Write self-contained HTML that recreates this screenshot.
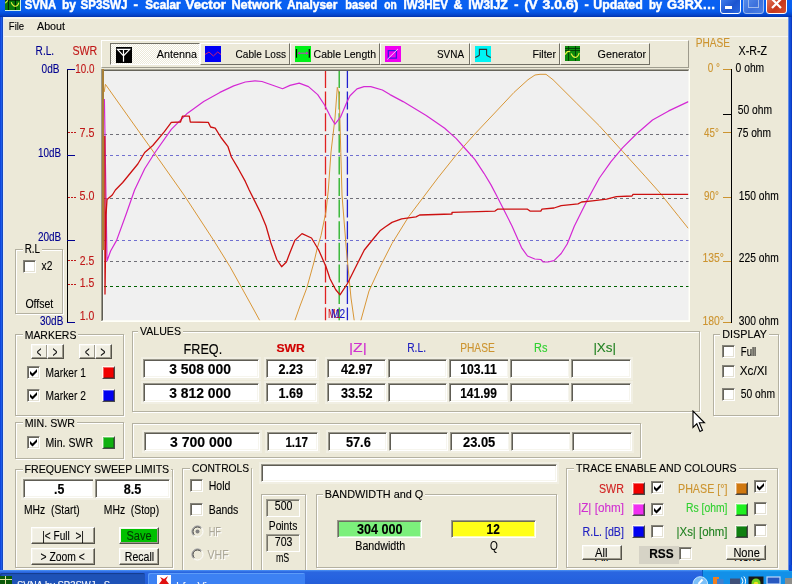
<!DOCTYPE html>
<html>
<head>
<meta charset="utf-8">
<title>SVNA by SP3SWJ</title>
<style>
html,body{margin:0;padding:0;}
body{width:792px;height:584px;overflow:hidden;background:#ECE9D8;position:relative;font-family:"Liberation Sans",sans-serif;font-size:12px;color:#000;}
.a{position:absolute;white-space:nowrap;}
#txt{pointer-events:none;will-change:transform;}
#title{left:0;top:0;width:792px;height:17px;background:linear-gradient(#0A60F2 0,#0860F0 45%,#0657E6 70%,#0445CC 88%,#0232AA 100%);}
#lb{left:0;top:17px;width:4px;height:556px;background:linear-gradient(90deg,#0A3CD8 0,#1C5CE8 1.5px,#1444B8 2.7px,#D8E4FF 3.1px,#F0F0EA 4px);}
#rb{left:788px;top:17px;width:4px;height:556px;background:linear-gradient(90deg,#B8C8EC 0,#1450DC 1px,#1255E0 2.2px,#0A30B8 4px);}
.gb{position:absolute;border:1px solid #B4B1A1;box-shadow:inset 1px 1px 0 #fff,1px 1px 0 #fff;box-sizing:border-box;}
.in{position:absolute;box-sizing:border-box;background:#fff;border:1px solid;border-color:#9A988C #fff #fff #9A988C;box-shadow:inset 1px 1px 0 #5E5C54,inset -1px -1px 0 #F6F5EE,0 0 0 2px #F1EFE3;}
.bt{position:absolute;box-sizing:border-box;background:#F0EEE2;border:1px solid;border-color:#fff #55534A #55534A #fff;box-shadow:inset -1px -1px 0 #9D9A8C,inset 1px 1px 0 #F6F4EA;}
.cb{position:absolute;box-sizing:border-box;width:13px;height:13px;background:#fff;border:1px solid;border-color:#85837A #fff #fff #85837A;box-shadow:inset 1px 1px 0 #66645A,inset -1px -1px 0 #E4E1D4;}
.cb svg{position:absolute;left:2px;top:2px;overflow:visible;}
.sq{position:absolute;box-sizing:border-box;width:12px;height:12px;border:1px solid;border-color:#FFF8F0 #4A4A4A #4A4A4A #FFF8F0;box-shadow:inset 1px 1px 0 rgba(255,255,255,.4),inset -1px -1px 0 rgba(40,40,40,.45);}
.tb{top:43px;width:90px;height:22px;box-sizing:border-box;border:1px solid;border-color:#fff #716F64 #716F64 #fff;}
.tb.on{border-color:#716F64 #fff #fff #716F64;background:#F6F5EF repeating-conic-gradient(#fff 0 25%,#ECE9D8 0 50%) 0 0/2px 2px;}
.tb .ic{position:absolute;left:4px;top:2px;width:16px;height:16px;}
.tb.on .ic{left:5px;top:3px;}

</style>
</head>
<body>
<div class="a" id="title"></div>
<div class="a" id="lb"></div><div class="a" id="rb"></div>
<svg class="a" style="left:5px;top:0" width="16" height="11" viewBox="0 0 16 11"><rect x="0" y="0" width="16" height="11" fill="#0A7A0A"/><rect x="0" y="0" width="15" height="0.6" fill="#021802"/><path d="M3.4 0V10M10.4 0V10" stroke="#032003" stroke-width="1.1" fill="none"/><path d="M0 10.5H16M15.5 0V11" stroke="#D0F0E0" stroke-width="1" fill="none"/><path d="M0.3 3.2L2.8 0.4M6.2 2.2Q8 6.5 10.5 6.3T13.8 2.6" stroke="#E8F040" stroke-width="1.1" fill="none"/></svg>
<div class="a" style="left:720px;top:-7px;width:21px;height:21px;border-radius:3px;border:1px solid #fff;box-sizing:border-box;background:linear-gradient(135deg,#4C8CF4,#1C54D0 60%,#2A68E0)"><div class="a" style="left:4px;top:12px;width:7px;height:3px;background:#fff"></div></div>
<div class="a" style="left:743px;top:-7px;width:21px;height:21px;border-radius:3px;border:1px solid #9DB9EC;box-sizing:border-box;background:linear-gradient(135deg,#5C94F0,#3C70DC 60%,#4A80E6)"><div class="a" style="left:4px;top:4px;width:9px;height:7px;border:1px solid #9DB9EC;border-top-width:2px"></div></div>
<div class="a" style="left:766px;top:-7px;width:21px;height:21px;border-radius:3px;border:1px solid #fff;box-sizing:border-box;background:linear-gradient(135deg,#E8856A,#C8381C 60%,#D85030)"><svg class="a" style="left:3px;top:3px" width="13" height="13" viewBox="0 0 13 13"><path d="M2 2L11 11M11 2L2 11" stroke="#fff" stroke-width="2.2"/></svg></div>
<div class="a" style="left:4px;top:17px;width:784px;height:2px;background:#F6F5EE"></div>
<div class="a" style="left:4px;top:36px;width:784px;height:1px;background:#F8F7F1"></div>
<div class="a" style="left:101px;top:40px;width:588px;height:28px;box-sizing:border-box;border:1px solid;border-color:#fff #9D9A8C #A09E90 #fff"></div>
<div class="a tb on" style="left:110px;width:90px"><svg class="ic" viewBox="0 0 16 16"><rect width="16" height="16" fill="#000"/><path d="M1.5 2.4H13.7L7.5 8.8ZM7.5 2.4V14.7" stroke="#fff" stroke-width="1.2" fill="none"/></svg></div>
<div class="a tb" style="left:200px;width:90px"><svg class="ic" viewBox="0 0 16 16"><rect width="16" height="16" fill="#0000F4"/><path d="M0 8.5L4 6L8.4 10L12.7 6L16 8.5" stroke="#D02070" stroke-width="1" fill="none"/></svg></div>
<div class="a tb" style="left:290px;width:90px"><svg class="ic" viewBox="0 0 16 16"><rect width="16" height="16" fill="#00F018"/><path d="M1.5 3V11.8M14.3 3V11.8" stroke="#000" stroke-width="1.2" fill="none"/><path d="M3 7.2H13" stroke="#C040C0" stroke-width="1"/><path d="M2.3 7.2L5 5.6V8.8ZM13.6 7.2L11 5.6V8.8Z" fill="#C030C0"/></svg></div>
<div class="a tb" style="left:380px;width:90px"><svg class="ic" viewBox="0 0 16 16"><rect width="16" height="16" fill="#F000F0"/><path d="M3.3 4.6H11.4V12.2H3.3Z" stroke="#3818E0" stroke-width="1.3" fill="none"/><path d="M2.3 13.4L12.9 3" stroke="#F8D0F8" stroke-width="1"/></svg></div>
<div class="a tb" style="left:470px;width:90px"><svg class="ic" viewBox="0 0 16 16"><rect width="16" height="16" fill="#00F4F4"/><path d="M0.3 11.4L3.6 9.8L4.4 9V3.4H11.6V9L12.4 9.8L15.7 11.4" stroke="#303030" stroke-width="1.1" fill="none"/></svg></div>
<div class="a tb" style="left:560px;width:90px"><svg class="ic" viewBox="0 0 16 16"><rect width="15" height="15" fill="#0E8C0E"/><path d="M0 2.5H15M0 4.5H15M3.5 0V15M10.5 0V15" stroke="#023402" stroke-width="1" fill="none" opacity=".8"/><path d="M0 8.5L2.4 5.6L5.2 5.4M6 7.4Q8 11.5 10.5 11.3T14.2 6.8" stroke="#E8F040" stroke-width="1.2" fill="none"/></svg></div>
<svg class="a" style="left:60px;top:60px" width="20" height="270" viewBox="60 60 20 270" shape-rendering="crispEdges"><path d="M67.5 69V323" stroke="#000" stroke-width="1" fill="none"/><path d="M67 69.5H75" stroke="#000090" stroke-width="1"/><path d="M67 155.5H75" stroke="#000090" stroke-width="1"/><path d="M67 240.5H75" stroke="#000090" stroke-width="1"/><path d="M67 322.5H75" stroke="#000090" stroke-width="1"/><path d="M68 132.5H76" stroke="#C01818" stroke-width="1" stroke-dasharray="2 1"/><path d="M68 197.5H76" stroke="#C01818" stroke-width="1" stroke-dasharray="2 1"/><path d="M68 260.5H76" stroke="#C01818" stroke-width="1" stroke-dasharray="2 1"/><path d="M68 284.5H76" stroke="#C01818" stroke-width="1" stroke-dasharray="2 1"/></svg>
<div class="gb" style="left:15px;top:249px;width:48px;height:65px;"></div>
<div class="a" style="left:22.7px;top:248px;width:19.4px;height:4px;background:#ECE9D8"></div>
<div class="cb" style="left:23px;top:259.5px;background:#fff"></div>
<svg class="a" style="left:720px;top:60px" width="20" height="270" viewBox="720 60 20 270" shape-rendering="crispEdges"><path d="M731.5 69V323" stroke="#000" stroke-width="1" fill="none"/><path d="M723 69.5H731" stroke="#CC9430" stroke-width="1"/><path d="M723 132.5H731" stroke="#CC9430" stroke-width="1"/><path d="M723 197.5H731" stroke="#CC9430" stroke-width="1"/><path d="M723 261.5H731" stroke="#CC9430" stroke-width="1"/><path d="M723 322.5H731" stroke="#CC9430" stroke-width="1"/><path d="M723 114.5H731" stroke="#000" stroke-width="1"/></svg>
<svg class="a" style="left:101px;top:69px" width="589" height="253" viewBox="101 69 589 253"><rect x="101" y="69" width="589" height="253" fill="#FFFFF8"/><rect x="101" y="69" width="588" height="1" fill="#A8A698"/><rect x="101" y="69" width="1" height="252" fill="#9A988A"/><rect x="102" y="70" width="586.5" height="1" fill="#66645A"/><rect x="102" y="70" width="1" height="250.5" fill="#5E5C54"/><rect x="103.4" y="71" width="585.1" height="249.3" fill="#F0F0F0"/><clipPath id="gc"><rect x="103" y="71" width="585.5" height="249.3"/></clipPath><g clip-path="url(#gc)"><path d="M103.5 134.5H689" stroke="#707078" stroke-width="1" stroke-dasharray="3 3" shape-rendering="crispEdges"/><path d="M103.5 155.5H689" stroke="#7070D0" stroke-width="1" stroke-dasharray="3 3" shape-rendering="crispEdges"/><path d="M103.5 198.5H689" stroke="#707078" stroke-width="1" stroke-dasharray="3 3" shape-rendering="crispEdges"/><path d="M103.5 240.5H689" stroke="#7070D0" stroke-width="1" stroke-dasharray="3 3" shape-rendering="crispEdges"/><path d="M103.5 261.5H689" stroke="#707078" stroke-width="1" stroke-dasharray="3 3" shape-rendering="crispEdges"/><path d="M103.5 286.5H689" stroke="#006000" stroke-width="1" stroke-dasharray="3 3" shape-rendering="crispEdges"/><path d="M325.5 70V321" stroke="#E02020" stroke-width="1.3" stroke-dasharray="18 3.6"/><path d="M339.2 70V321" stroke="#20B020" stroke-width="1.3" stroke-dasharray="18 3.6"/><path d="M347.4 70V321" stroke="#2020D0" stroke-width="1.3" stroke-dasharray="18 3.6"/><polyline points="104.2,92.0 105.4,84.3 130.0,119.0 160.0,161.0 184.0,195.0 213.7,240.4 230.0,266.7 242.0,288.3 254.0,310.0 260.0,321.0" fill="none" stroke="#D89636" stroke-width="1.0" stroke-linejoin="round"/><polyline points="294.7,321.0 300.0,306.0 306.7,288.3 314.0,262.0 317.3,248.0 321.0,235.6 326.0,211.6 328.3,190.0 331.0,152.0 335.0,118.0 337.3,87.3 339.2,94.6 340.8,152.4 342.0,195.0 346.4,250.0 351.0,298.0 354.3,321.0" fill="none" stroke="#D89636" stroke-width="1.0" stroke-linejoin="round"/><polyline points="360.7,321.0 369.0,291.0 380.0,267.0 392.0,243.5 408.8,216.4 425.0,195.0 437.8,178.0 456.3,154.8 474.8,134.0 495.6,112.0 514.0,92.4 528.0,79.7 535.0,75.0 540.0,74.3 546.0,74.3 553.0,79.7 576.2,102.8 599.4,125.9 622.5,151.3 645.6,176.8 661.8,195.0 664.3,198.4 678.7,216.4 688.3,228.4" fill="none" stroke="#D89636" stroke-width="1.0" stroke-linejoin="round"/><polyline points="104.4,99.0 107.0,261.0 110.6,251.0 116.6,240.4 126.2,214.0 134.6,190.0 144.7,168.7 155.0,152.5 171.3,129.4 187.5,113.2 203.7,101.6 219.9,92.4 233.7,85.9 245.3,82.0 255.0,80.8 262.0,81.5 272.0,85.0 282.6,88.7 290.0,85.4 299.2,83.1 308.5,86.6 317.7,94.6 324.6,105.0 330.4,116.6 335.0,124.2 340.8,116.6 346.6,102.7 350.0,95.8 357.0,88.9 364.0,86.6 370.8,86.6 382.4,90.0 390.0,94.6 403.1,101.6 426.2,115.5 444.7,128.2 456.3,138.6 465.5,149.0 474.8,159.4 484.0,173.3 491.0,184.9 496.3,195.0 502.3,206.8 512.0,226.0 521.5,247.6 527.5,256.0 534.8,259.0 540.8,259.5 543.2,262.0 548.0,262.0 554.0,260.7 561.2,253.5 567.2,244.0 574.4,226.0 581.6,211.6 587.6,199.6 592.8,190.0 599.4,178.0 611.0,161.7 622.5,147.9 636.4,134.0 652.5,120.0 668.7,110.9 688.4,101.6" fill="none" stroke="#D428D4" stroke-width="1.2" stroke-linejoin="round"/><polyline points="104.8,136.0 105.0,294.0 106.0,215.0 107.0,199.6 112.3,195.0 115.4,190.0 122.7,182.5 137.8,164.0 144.7,152.5 152.8,145.5 164.4,131.7 171.3,122.4 180.5,122.0 182.4,116.2 189.3,116.2 190.3,122.0 208.3,122.4 210.6,127.0 215.2,128.2 221.0,137.5 228.0,146.7 231.4,157.0 238.3,168.7 245.3,181.4 249.2,190.0 254.0,199.6 260.0,211.6 266.0,226.0 270.8,242.8 276.8,259.5 281.6,266.7 286.4,262.0 290.0,252.4 294.8,240.4 302.0,233.6 311.5,238.0 318.7,250.0 326.0,266.7 330.0,278.7 335.6,289.5 340.0,294.8 347.5,283.5 354.7,269.0 364.3,250.0 374.0,238.0 380.0,230.8 384.8,227.2 392.0,222.4 401.6,218.8 416.0,216.9 419.6,215.0 452.0,214.0 452.0,212.3 495.0,211.1 497.5,209.2 527.5,209.2 530.0,211.1 540.8,211.1 542.0,209.2 554.0,208.0 561.2,205.6 578.0,203.9 581.6,202.0 592.4,200.8 606.7,199.1 616.3,196.7 632.0,196.0 633.0,194.3 688.3,194.3" fill="none" stroke="#CC1010" stroke-width="1.3" stroke-linejoin="round"/></g></svg>
<div class="a" style="left:102px;top:69px;width:2px;height:181px;background:#A88038"></div>
<div class="gb" style="left:15px;top:334px;width:109px;height:82px;"></div>
<div class="a" style="left:22.7px;top:333px;width:55.7px;height:4px;background:#ECE9D8"></div>
<div class="bt" style="left:31px;top:344px;width:16.5px;height:14.5px;background:#F0EEE2"></div>
<div class="bt" style="left:47px;top:344px;width:16.5px;height:14.5px;background:#F0EEE2"></div>
<div class="bt" style="left:79px;top:344px;width:16.5px;height:14.5px;background:#F0EEE2"></div>
<div class="bt" style="left:95px;top:344px;width:16.5px;height:14.5px;background:#F0EEE2"></div>
<div class="cb" style="left:27px;top:366px;background:#fff"><svg width="7" height="7" viewBox="0 0 7 7"><path d="M0 2L2.5 4.5L7 0V3L2.5 7.5L0 5Z" fill="#000"/></svg></div>
<div class="sq" style="left:102px;top:366px;width:13px;height:13px;background:#F00000"></div>
<div class="cb" style="left:27px;top:389px;background:#fff"><svg width="7" height="7" viewBox="0 0 7 7"><path d="M0 2L2.5 4.5L7 0V3L2.5 7.5L0 5Z" fill="#000"/></svg></div>
<div class="sq" style="left:102px;top:389px;width:13px;height:13px;background:#0000F0"></div>
<div class="gb" style="left:15px;top:422px;width:109px;height:37px;"></div>
<div class="a" style="left:22.7px;top:421px;width:54.3px;height:4px;background:#ECE9D8"></div>
<div class="cb" style="left:27px;top:436px;background:#fff"><svg width="7" height="7" viewBox="0 0 7 7"><path d="M0 2L2.5 4.5L7 0V3L2.5 7.5L0 5Z" fill="#000"/></svg></div>
<div class="sq" style="left:102px;top:436px;width:13px;height:13px;background:#10B010"></div>
<div class="gb" style="left:132px;top:331px;width:568px;height:81px;"></div>
<div class="a" style="left:138px;top:330.5px;width:45px;height:4px;background:#ECE9D8"></div>
<div class="in" style="left:143px;top:359px;width:116px;height:19px;background:#fff"></div>
<div class="in" style="left:266px;top:359px;width:51px;height:19px;background:#fff"></div>
<div class="in" style="left:327px;top:359px;width:59px;height:19px;background:#fff"></div>
<div class="in" style="left:388px;top:359px;width:59px;height:19px;background:#fff"></div>
<div class="in" style="left:449px;top:359px;width:60px;height:19px;background:#fff"></div>
<div class="in" style="left:510px;top:359px;width:60px;height:19px;background:#fff"></div>
<div class="in" style="left:571px;top:359px;width:60px;height:19px;background:#fff"></div>
<div class="in" style="left:143px;top:383px;width:116px;height:19px;background:#fff"></div>
<div class="in" style="left:266px;top:383px;width:51px;height:19px;background:#fff"></div>
<div class="in" style="left:327px;top:383px;width:59px;height:19px;background:#fff"></div>
<div class="in" style="left:388px;top:383px;width:59px;height:19px;background:#fff"></div>
<div class="in" style="left:449px;top:383px;width:60px;height:19px;background:#fff"></div>
<div class="in" style="left:510px;top:383px;width:60px;height:19px;background:#fff"></div>
<div class="in" style="left:571px;top:383px;width:60px;height:19px;background:#fff"></div>
<div class="gb" style="left:132px;top:423px;width:509px;height:35px;"></div>
<div class="in" style="left:144px;top:432px;width:116px;height:19px;background:#fff"></div>
<div class="in" style="left:267px;top:432px;width:51px;height:19px;background:#fff"></div>
<div class="in" style="left:328px;top:432px;width:59px;height:19px;background:#fff"></div>
<div class="in" style="left:389px;top:432px;width:59px;height:19px;background:#fff"></div>
<div class="in" style="left:450px;top:432px;width:60px;height:19px;background:#fff"></div>
<div class="in" style="left:511px;top:432px;width:60px;height:19px;background:#fff"></div>
<div class="in" style="left:572px;top:432px;width:60px;height:19px;background:#fff"></div>
<div class="gb" style="left:713px;top:334px;width:66px;height:82px;"></div>
<div class="a" style="left:720.3px;top:333.5px;width:48.7px;height:4px;background:#ECE9D8"></div>
<div class="cb" style="left:722px;top:345px;background:#fff"></div>
<div class="cb" style="left:722px;top:365px;background:#fff"></div>
<div class="cb" style="left:722px;top:388px;background:#fff"></div>
<svg class="a" style="left:692px;top:410px" width="14" height="23" viewBox="0 0 14 23"><path d="M1 1V17.5L4.8 13.8L8 21.5L10.5 20.3L7.3 12.8H12.5Z" fill="#fff" stroke="#000" stroke-width="1.1"/></svg>
<div class="gb" style="left:15px;top:469px;width:158px;height:99px;"></div>
<div class="a" style="left:22.6px;top:468.5px;width:148.6px;height:4px;background:#ECE9D8"></div>
<div class="in" style="left:23px;top:479px;width:71px;height:19px;background:#fff"></div>
<div class="in" style="left:95px;top:479px;width:75px;height:19px;background:#fff"></div>
<div class="bt" style="left:31px;top:527px;width:64px;height:16.5px;background:#F0EEE2"></div>
<div class="bt" style="left:31px;top:548px;width:64px;height:16.5px;background:#F0EEE2"></div>
<div class="bt" style="left:119px;top:527px;width:40px;height:16.5px;background:#00C000"></div>
<div class="bt" style="left:119px;top:548px;width:40px;height:16.5px;background:#F0EEE2"></div>
<div class="gb" style="left:182px;top:468px;width:70px;height:108px;"></div>
<div class="a" style="left:190px;top:467px;width:61.2px;height:4px;background:#ECE9D8"></div>
<div class="cb" style="left:190px;top:479px;background:#fff"></div>
<div class="cb" style="left:190px;top:503px;background:#fff"></div>
<svg class="a" style="left:190.5px;top:524.5px" width="13" height="13" viewBox="0 0 13 13"><circle cx="6.5" cy="6.5" r="5.5" fill="#ECE9D8" stroke="#fff" stroke-width="1"/><path d="M2.6 10.4A5.5 5.5 0 0 1 10.4 2.6" fill="none" stroke="#808080" stroke-width="1"/><path d="M3.3 9.7A4.5 4.5 0 0 1 9.7 3.3" fill="none" stroke="#404040" stroke-width="1"/><circle cx="6.5" cy="6.5" r="2" fill="#808080"/></svg>
<svg class="a" style="left:190.5px;top:548.3px" width="13" height="13" viewBox="0 0 13 13"><circle cx="6.5" cy="6.5" r="5.5" fill="#ECE9D8" stroke="#fff" stroke-width="1"/><path d="M2.6 10.4A5.5 5.5 0 0 1 10.4 2.6" fill="none" stroke="#808080" stroke-width="1"/><path d="M3.3 9.7A4.5 4.5 0 0 1 9.7 3.3" fill="none" stroke="#404040" stroke-width="1"/></svg>
<div class="in" style="left:261px;top:464px;width:296px;height:18px;background:#fff"></div>
<div class="gb" style="left:261px;top:494px;width:45px;height:82px;"></div>
<div class="in" style="left:266px;top:499px;width:34px;height:18px;background:#ECE9D8;border-color:#A09E92 #fff #fff #A09E92;box-shadow:inset 1px 1px 0 #77756A"></div>
<div class="in" style="left:266px;top:534px;width:34px;height:18px;background:#ECE9D8;border-color:#A09E92 #fff #fff #A09E92;box-shadow:inset 1px 1px 0 #77756A"></div>
<div class="gb" style="left:316px;top:494px;width:241px;height:74px;"></div>
<div class="a" style="left:322.8px;top:493.5px;width:102.5px;height:4px;background:#ECE9D8"></div>
<div class="in" style="left:337px;top:520px;width:85px;height:18px;background:#7CF07C;box-shadow:inset 1px 1px 0 #6A7060,inset -1px -1px 0 #C8F8C8"></div>
<div class="in" style="left:451px;top:520px;width:85px;height:18px;background:#FFFF18;box-shadow:inset 1px 1px 0 #707050,inset -1px -1px 0 #FFFFB0"></div>
<div class="gb" style="left:566px;top:468px;width:212px;height:100px;"></div>
<div class="a" style="left:574.1px;top:467px;width:164.5px;height:4px;background:#ECE9D8"></div>
<div class="sq" style="left:632px;top:482px;width:13px;height:13px;background:#F00000"></div>
<div class="cb" style="left:651px;top:481px;background:#fff"><svg width="7" height="7" viewBox="0 0 7 7"><path d="M0 2L2.5 4.5L7 0V3L2.5 7.5L0 5Z" fill="#000"/></svg></div>
<div class="sq" style="left:735px;top:482px;width:13px;height:13px;background:#D07810"></div>
<div class="cb" style="left:754px;top:480px;background:#fff"><svg width="7" height="7" viewBox="0 0 7 7"><path d="M0 2L2.5 4.5L7 0V3L2.5 7.5L0 5Z" fill="#000"/></svg></div>
<div class="sq" style="left:632px;top:503px;width:13px;height:13px;background:#F030F0"></div>
<div class="cb" style="left:651px;top:503px;background:#fff"><svg width="7" height="7" viewBox="0 0 7 7"><path d="M0 2L2.5 4.5L7 0V3L2.5 7.5L0 5Z" fill="#000"/></svg></div>
<div class="sq" style="left:735px;top:503px;width:13px;height:13px;background:#20F020"></div>
<div class="cb" style="left:754px;top:502px;background:#fff"></div>
<div class="sq" style="left:632px;top:525px;width:13px;height:13px;background:#0000F0"></div>
<div class="cb" style="left:651px;top:525px;background:#fff"></div>
<div class="sq" style="left:735px;top:525px;width:13px;height:13px;background:#108010"></div>
<div class="cb" style="left:754px;top:524px;background:#fff"></div>
<div class="a" style="left:595px;top:550px;font-size:12px;line-height:14px">All</div>
<div class="bt" style="left:582px;top:544.5px;width:39.5px;height:15.5px;background:#F0EEE2"></div>
<div class="a" style="left:638.5px;top:546px;width:40px;height:17.5px;background:#D6D3C6"></div>
<div class="cb" style="left:678.5px;top:547px;background:#fff"></div>
<div class="a" style="left:734px;top:550px;font-size:12px;line-height:14px;letter-spacing:-.4px">None</div>
<div class="bt" style="left:726px;top:544.5px;width:40px;height:15.5px;background:#F0EEE2"></div>
<div class="a" style="left:0px;top:569.5px;width:792px;height:15px;background:linear-gradient(#4C94F6 0,#2A66E0 2px,#2663E0 50%,#245DD7 100%)"></div>
<div class="a" style="left:0px;top:573px;width:145px;height:12px;background:#1E52B7;border-radius:2px 2px 0 0;box-shadow:inset 1px 1px 1px #143C8C"></div>
<div class="a" style="left:147.5px;top:573px;width:157px;height:12px;background:#3C81F3;border-radius:2px 2px 0 0;box-shadow:inset 1px 1px 0 #5C9CF8"></div>
<div class="a" style="left:701.5px;top:569.5px;width:91px;height:15px;background:linear-gradient(#2CB0F8 0,#1290E8 2px,#1290E8);border-left:1px solid #0C5CC0"></div>
<svg class="a" style="left:0;top:576px" width="12" height="8" viewBox="0 0 12 8"><rect width="12" height="8" fill="#0A5A0A"/><path d="M0 3.5H12M5.5 0V8" stroke="#E0E0A0" stroke-width="1"/></svg>
<svg class="a" style="left:157px;top:575px" width="14" height="9" viewBox="0 0 14 9"><rect width="14" height="9" fill="#fff"/><path d="M3 2L7 4L11 1L9 5L12 9H2L5 5Z" fill="#E01010"/></svg>
<svg class="a" style="left:690px;top:574px" width="102" height="10" viewBox="690 574 102 10"><circle cx="700.3" cy="584" r="7.3" fill="#7CC0F8" stroke="#C8E8FF" stroke-width="1"/><path d="M702.5 579.5L698.5 584" stroke="#fff" stroke-width="2"/><rect x="713" y="577" width="6" height="7" fill="#F08020"/><rect x="717" y="579" width="6.5" height="5" fill="#4080D0"/><rect x="730" y="578.5" width="10" height="5.5" fill="#405078"/><path d="M741.5 577.5Q744.5 581 741.5 585M743.8 576.5Q747.5 581 743.8 586" stroke="#fff" stroke-width="1" fill="none"/><rect x="748.5" y="576.5" width="15" height="7.5" fill="#181818"/><circle cx="756" cy="583" r="4.5" fill="#70D020"/><circle cx="756" cy="584" r="2.3" fill="#F0E020"/><rect x="767" y="577" width="13" height="7" fill="#2858C0" stroke="#C0D8F8" stroke-width="1.2"/><rect x="785" y="578" width="7" height="6" fill="#8C8C88"/></svg>
<div class="a" style="left:788.5px;top:565px;width:3.5px;height:6px;background:#0A48D8"></div>
<svg class="a" id="txt" style="left:0;top:0" width="792" height="584" viewBox="0 0 792 584" font-family="Liberation Sans, sans-serif">
<text x="24.7" y="8.8" textLength="31.5" lengthAdjust="spacingAndGlyphs" font-size="13" fill="#fff" font-weight="bold" stroke="#fff" stroke-width="0.5">SVNA</text>
<text x="61.9" y="8.8" textLength="14.1" lengthAdjust="spacingAndGlyphs" font-size="13" fill="#fff" font-weight="bold" stroke="#fff" stroke-width="0.5">by</text>
<text x="80.4" y="8.8" textLength="47.1" lengthAdjust="spacingAndGlyphs" font-size="13" fill="#fff" font-weight="bold" stroke="#fff" stroke-width="0.5">SP3SWJ</text>
<text x="133.5" y="8.8" textLength="4.5" lengthAdjust="spacingAndGlyphs" font-size="13" fill="#fff" font-weight="bold" stroke="#fff" stroke-width="0.5">-</text>
<text x="145.3" y="8.8" textLength="35.2" lengthAdjust="spacingAndGlyphs" font-size="13" fill="#fff" font-weight="bold" stroke="#fff" stroke-width="0.5">Scalar</text>
<text x="185.6" y="8.8" textLength="40.4" lengthAdjust="spacingAndGlyphs" font-size="13" fill="#fff" font-weight="bold" stroke="#fff" stroke-width="0.5">Vector</text>
<text x="231.4" y="8.8" textLength="50.2" lengthAdjust="spacingAndGlyphs" font-size="13" fill="#fff" font-weight="bold" stroke="#fff" stroke-width="0.5">Network</text>
<text x="287.0" y="8.8" textLength="50.3" lengthAdjust="spacingAndGlyphs" font-size="13" fill="#fff" font-weight="bold" stroke="#fff" stroke-width="0.5">Analyser</text>
<text x="345.3" y="8.8" textLength="31.9" lengthAdjust="spacingAndGlyphs" font-size="13" fill="#fff" font-weight="bold" stroke="#fff" stroke-width="0.5">based</text>
<text x="384.2" y="8.8" textLength="12.5" lengthAdjust="spacingAndGlyphs" font-size="13" fill="#fff" font-weight="bold" stroke="#fff" stroke-width="0.5">on</text>
<text x="403.6" y="8.8" textLength="44.4" lengthAdjust="spacingAndGlyphs" font-size="13" fill="#fff" font-weight="bold" stroke="#fff" stroke-width="0.5">IW3HEV</text>
<text x="453.6" y="8.8" textLength="8.9" lengthAdjust="spacingAndGlyphs" font-size="13" fill="#fff" font-weight="bold" stroke="#fff" stroke-width="0.5">&amp;</text>
<text x="468.3" y="8.8" textLength="39.5" lengthAdjust="spacingAndGlyphs" font-size="13" fill="#fff" font-weight="bold" stroke="#fff" stroke-width="0.5">IW3IJZ</text>
<text x="514.3" y="8.8" textLength="4.2" lengthAdjust="spacingAndGlyphs" font-size="13" fill="#fff" font-weight="bold" stroke="#fff" stroke-width="0.5">-</text>
<text x="524.4" y="8.8" textLength="13.1" lengthAdjust="spacingAndGlyphs" font-size="13" fill="#fff" font-weight="bold" stroke="#fff" stroke-width="0.5">(V</text>
<text x="542.5" y="8.8" textLength="36.0" lengthAdjust="spacingAndGlyphs" font-size="13" fill="#fff" font-weight="bold" stroke="#fff" stroke-width="0.5">3.0.6)</text>
<text x="584.4" y="8.8" textLength="4.2" lengthAdjust="spacingAndGlyphs" font-size="13" fill="#fff" font-weight="bold" stroke="#fff" stroke-width="0.5">-</text>
<text x="593.3" y="8.8" textLength="49.5" lengthAdjust="spacingAndGlyphs" font-size="13" fill="#fff" font-weight="bold" stroke="#fff" stroke-width="0.5">Updated</text>
<text x="648.9" y="8.8" textLength="13.3" lengthAdjust="spacingAndGlyphs" font-size="13" fill="#fff" font-weight="bold" stroke="#fff" stroke-width="0.5">by</text>
<text x="667.0" y="8.8" textLength="48.5" lengthAdjust="spacingAndGlyphs" font-size="13" fill="#fff" font-weight="bold" stroke="#fff" stroke-width="0.5">G3RX…</text>
<text x="8.8" y="29.6" textLength="15.4" lengthAdjust="spacingAndGlyphs" font-size="10.7" fill="#000" stroke="#000" stroke-width="0.12">File</text>
<text x="37.0" y="29.6" textLength="28.0" lengthAdjust="spacingAndGlyphs" font-size="10.7" fill="#000" stroke="#000" stroke-width="0.12">About</text>
<text x="156.8" y="58.3" textLength="40.2" lengthAdjust="spacingAndGlyphs" font-size="11" fill="#000" stroke="#000" stroke-width="0.12">Antenna</text>
<text x="235.6" y="58.3" textLength="50.4" lengthAdjust="spacingAndGlyphs" font-size="11" fill="#000" stroke="#000" stroke-width="0.12">Cable Loss</text>
<text x="313.6" y="58.3" textLength="62.4" lengthAdjust="spacingAndGlyphs" font-size="11" fill="#000" stroke="#000" stroke-width="0.12">Cable Length</text>
<text x="437.0" y="58.3" textLength="27.0" lengthAdjust="spacingAndGlyphs" font-size="11" fill="#000" stroke="#000" stroke-width="0.12">SVNA</text>
<text x="532.5" y="58.3" textLength="23.5" lengthAdjust="spacingAndGlyphs" font-size="11" fill="#000" stroke="#000" stroke-width="0.12">Filter</text>
<text x="597.6" y="58.3" textLength="48.4" lengthAdjust="spacingAndGlyphs" font-size="11" fill="#000" stroke="#000" stroke-width="0.12">Generator</text>
<text x="35.6" y="54.8" textLength="18.5" lengthAdjust="spacingAndGlyphs" font-size="12" fill="#000090" stroke="#000090" stroke-width="0.12">R.L.</text>
<text x="72.5" y="54.8" textLength="24.8" lengthAdjust="spacingAndGlyphs" font-size="12" fill="#C01818" stroke="#C01818" stroke-width="0.12">SWR</text>
<text x="41.6" y="72.6" textLength="17.9" lengthAdjust="spacingAndGlyphs" font-size="12" fill="#000090" stroke="#000090" stroke-width="0.12">0dB</text>
<text x="75.3" y="72.6" textLength="19.1" lengthAdjust="spacingAndGlyphs" font-size="12" fill="#C01818" stroke="#C01818" stroke-width="0.12">10.0</text>
<text x="79.6" y="136.5" textLength="14.9" lengthAdjust="spacingAndGlyphs" font-size="12" fill="#C01818" stroke="#C01818" stroke-width="0.12">7.5</text>
<text x="38.0" y="157.0" textLength="23.0" lengthAdjust="spacingAndGlyphs" font-size="12" fill="#000090" stroke="#000090" stroke-width="0.12">10dB</text>
<text x="79.6" y="200.4" textLength="14.9" lengthAdjust="spacingAndGlyphs" font-size="12" fill="#C01818" stroke="#C01818" stroke-width="0.12">5.0</text>
<text x="37.9" y="241.0" textLength="23.3" lengthAdjust="spacingAndGlyphs" font-size="12" fill="#000090" stroke="#000090" stroke-width="0.12">20dB</text>
<text x="79.7" y="264.5" textLength="14.5" lengthAdjust="spacingAndGlyphs" font-size="12" fill="#C01818" stroke="#C01818" stroke-width="0.12">2.5</text>
<text x="79.7" y="287.0" textLength="14.5" lengthAdjust="spacingAndGlyphs" font-size="12" fill="#C01818" stroke="#C01818" stroke-width="0.12">1.5</text>
<text x="79.7" y="320.0" textLength="14.5" lengthAdjust="spacingAndGlyphs" font-size="12" fill="#C01818" stroke="#C01818" stroke-width="0.12">1.0</text>
<text x="40.0" y="324.8" textLength="23.3" lengthAdjust="spacingAndGlyphs" font-size="12" fill="#000090" stroke="#000090" stroke-width="0.12">30dB</text>
<text x="24.7" y="252.7" textLength="15.4" lengthAdjust="spacingAndGlyphs" font-size="12" fill="#000" stroke="#000" stroke-width="0.12">R.L</text>
<text x="41.6" y="269.6" textLength="10.8" lengthAdjust="spacingAndGlyphs" font-size="12" fill="#000" stroke="#000" stroke-width="0.12">x2</text>
<text x="25.4" y="307.5" textLength="27.9" lengthAdjust="spacingAndGlyphs" font-size="12" fill="#000" stroke="#000" stroke-width="0.12">Offset</text>
<text x="695.7" y="47.1" textLength="34.3" lengthAdjust="spacingAndGlyphs" font-size="12" fill="#CC9430" stroke="#CC9430" stroke-width="0.12">PHASE</text>
<text x="738.5" y="54.5" textLength="28.5" lengthAdjust="spacingAndGlyphs" font-size="12" fill="#000" stroke="#000" stroke-width="0.12">X-R-Z</text>
<text x="707.7" y="72.3" textLength="12.3" lengthAdjust="spacingAndGlyphs" font-size="12" fill="#CC9430" stroke="#CC9430" stroke-width="0.12">0 °</text>
<text x="735.6" y="72.3" textLength="28.6" lengthAdjust="spacingAndGlyphs" font-size="12" fill="#000" stroke="#000" stroke-width="0.12">0 ohm</text>
<text x="737.7" y="114.3" textLength="34.3" lengthAdjust="spacingAndGlyphs" font-size="12" fill="#000" stroke="#000" stroke-width="0.12">50 ohm</text>
<text x="704.0" y="136.6" textLength="14.8" lengthAdjust="spacingAndGlyphs" font-size="12" fill="#CC9430" stroke="#CC9430" stroke-width="0.12">45°</text>
<text x="737.0" y="136.6" textLength="34.0" lengthAdjust="spacingAndGlyphs" font-size="12" fill="#000" stroke="#000" stroke-width="0.12">75 ohm</text>
<text x="704.0" y="199.6" textLength="14.8" lengthAdjust="spacingAndGlyphs" font-size="12" fill="#CC9430" stroke="#CC9430" stroke-width="0.12">90°</text>
<text x="738.8" y="199.6" textLength="39.9" lengthAdjust="spacingAndGlyphs" font-size="12" fill="#000" stroke="#000" stroke-width="0.12">150 ohm</text>
<text x="702.5" y="262.4" textLength="21.5" lengthAdjust="spacingAndGlyphs" font-size="12" fill="#CC9430" stroke="#CC9430" stroke-width="0.12">135°</text>
<text x="738.8" y="262.4" textLength="39.9" lengthAdjust="spacingAndGlyphs" font-size="12" fill="#000" stroke="#000" stroke-width="0.12">225 ohm</text>
<text x="702.5" y="325.0" textLength="21.5" lengthAdjust="spacingAndGlyphs" font-size="12" fill="#CC9430" stroke="#CC9430" stroke-width="0.12">180°</text>
<text x="738.8" y="325.0" textLength="39.9" lengthAdjust="spacingAndGlyphs" font-size="12" fill="#000" stroke="#000" stroke-width="0.12">300 ohm</text>
<text x="328.0" y="317.8" textLength="12.5" lengthAdjust="spacingAndGlyphs" font-size="12" fill="#D81818" stroke="#D81818" stroke-width="0.12">M1</text>
<text x="331.0" y="317.8" textLength="14.0" lengthAdjust="spacingAndGlyphs" font-size="12" fill="#1818C8" stroke="#1818C8" stroke-width="0.12">M2</text>
<text x="24.7" y="338.6" textLength="51.7" lengthAdjust="spacingAndGlyphs" font-size="11" fill="#000" stroke="#000" stroke-width="0.12">MARKERS</text>
<text x="36.8" y="357.0" textLength="4.5" lengthAdjust="spacingAndGlyphs" font-size="15" fill="#000" stroke="#000" stroke-width="0.12">&lt;</text>
<text x="52.7" y="357.0" textLength="4.6" lengthAdjust="spacingAndGlyphs" font-size="15" fill="#000" stroke="#000" stroke-width="0.12">&gt;</text>
<text x="85.1" y="357.0" textLength="4.5" lengthAdjust="spacingAndGlyphs" font-size="15" fill="#000" stroke="#000" stroke-width="0.12">&lt;</text>
<text x="100.4" y="357.0" textLength="4.9" lengthAdjust="spacingAndGlyphs" font-size="15" fill="#000" stroke="#000" stroke-width="0.12">&gt;</text>
<text x="45.6" y="376.8" textLength="40.2" lengthAdjust="spacingAndGlyphs" font-size="12" fill="#000" stroke="#000" stroke-width="0.12">Marker 1</text>
<text x="45.6" y="399.8" textLength="40.2" lengthAdjust="spacingAndGlyphs" font-size="12" fill="#000" stroke="#000" stroke-width="0.12">Marker 2</text>
<text x="24.7" y="426.7" textLength="50.3" lengthAdjust="spacingAndGlyphs" font-size="11" fill="#000" stroke="#000" stroke-width="0.12">MIN. SWR</text>
<text x="45.6" y="446.8" textLength="47.4" lengthAdjust="spacingAndGlyphs" font-size="12" fill="#000" stroke="#000" stroke-width="0.12">Min. SWR</text>
<text x="140.0" y="335.1" textLength="41.0" lengthAdjust="spacingAndGlyphs" font-size="11" fill="#000" stroke="#000" stroke-width="0.12">VALUES</text>
<text x="183.6" y="353.6" textLength="38.6" lengthAdjust="spacingAndGlyphs" font-size="14" fill="#000" stroke="#000" stroke-width="0.12">FREQ.</text>
<text x="276.5" y="351.8" textLength="28.3" lengthAdjust="spacingAndGlyphs" font-size="11" fill="#D00000" font-weight="bold" stroke="#D00000" stroke-width="0.15">SWR</text>
<text x="349.0" y="351.8" textLength="17.8" lengthAdjust="spacingAndGlyphs" font-size="12" fill="#D030D0" stroke="#D030D0" stroke-width="0.12">|Z|</text>
<text x="407.2" y="351.8" textLength="18.8" lengthAdjust="spacingAndGlyphs" font-size="12" fill="#2020C0" stroke="#2020C0" stroke-width="0.12">R.L.</text>
<text x="460.2" y="351.8" textLength="34.6" lengthAdjust="spacingAndGlyphs" font-size="12" fill="#CC9430" stroke="#CC9430" stroke-width="0.12">PHASE</text>
<text x="534.0" y="351.8" textLength="13.4" lengthAdjust="spacingAndGlyphs" font-size="12" fill="#30D030" stroke="#30D030" stroke-width="0.12">Rs</text>
<text x="593.4" y="351.8" textLength="22.6" lengthAdjust="spacingAndGlyphs" font-size="12" fill="#208020" stroke="#208020" stroke-width="0.12">|Xs|</text>
<text x="169.2" y="373.9" textLength="61.8" lengthAdjust="spacingAndGlyphs" font-size="14" fill="#000" font-weight="bold" stroke="#000" stroke-width="0.15">3 508 000</text>
<text x="278.5" y="373.9" textLength="24.5" lengthAdjust="spacingAndGlyphs" font-size="14" fill="#000" font-weight="bold" stroke="#000" stroke-width="0.15">2.23</text>
<text x="341.0" y="373.9" textLength="31.6" lengthAdjust="spacingAndGlyphs" font-size="14" fill="#000" font-weight="bold" stroke="#000" stroke-width="0.15">42.97</text>
<text x="460.2" y="373.9" textLength="36.6" lengthAdjust="spacingAndGlyphs" font-size="14" fill="#000" font-weight="bold" stroke="#000" stroke-width="0.15">103.11</text>
<text x="169.2" y="397.9" textLength="61.8" lengthAdjust="spacingAndGlyphs" font-size="14" fill="#000" font-weight="bold" stroke="#000" stroke-width="0.15">3 812 000</text>
<text x="278.5" y="397.9" textLength="24.5" lengthAdjust="spacingAndGlyphs" font-size="14" fill="#000" font-weight="bold" stroke="#000" stroke-width="0.15">1.69</text>
<text x="341.0" y="397.9" textLength="31.6" lengthAdjust="spacingAndGlyphs" font-size="14" fill="#000" font-weight="bold" stroke="#000" stroke-width="0.15">33.52</text>
<text x="460.2" y="397.9" textLength="36.6" lengthAdjust="spacingAndGlyphs" font-size="14" fill="#000" font-weight="bold" stroke="#000" stroke-width="0.15">141.99</text>
<text x="170.0" y="447.3" textLength="62.3" lengthAdjust="spacingAndGlyphs" font-size="14" fill="#000" font-weight="bold" stroke="#000" stroke-width="0.15">3 700 000</text>
<text x="285.4" y="447.3" textLength="22.6" lengthAdjust="spacingAndGlyphs" font-size="14" fill="#000" font-weight="bold" stroke="#000" stroke-width="0.15">1.17</text>
<text x="345.9" y="447.3" textLength="24.9" lengthAdjust="spacingAndGlyphs" font-size="14" fill="#000" font-weight="bold" stroke="#000" stroke-width="0.15">57.6</text>
<text x="463.0" y="447.3" textLength="32.3" lengthAdjust="spacingAndGlyphs" font-size="14" fill="#000" font-weight="bold" stroke="#000" stroke-width="0.15">23.05</text>
<text x="722.3" y="338.4" textLength="44.7" lengthAdjust="spacingAndGlyphs" font-size="11" fill="#000" stroke="#000" stroke-width="0.12">DISPLAY</text>
<text x="740.8" y="355.5" textLength="15.4" lengthAdjust="spacingAndGlyphs" font-size="12" fill="#000" stroke="#000" stroke-width="0.12">Full</text>
<text x="739.8" y="375.4" textLength="27.2" lengthAdjust="spacingAndGlyphs" font-size="12" fill="#000" stroke="#000" stroke-width="0.12">Xc/Xl</text>
<text x="740.8" y="398.4" textLength="34.3" lengthAdjust="spacingAndGlyphs" font-size="12" fill="#000" stroke="#000" stroke-width="0.12">50 ohm</text>
<text x="24.6" y="473.3" textLength="144.6" lengthAdjust="spacingAndGlyphs" font-size="11" fill="#000" stroke="#000" stroke-width="0.12">FREQUENCY SWEEP LIMITS</text>
<text x="54.0" y="493.6" textLength="10.3" lengthAdjust="spacingAndGlyphs" font-size="14" fill="#000" font-weight="bold" stroke="#000" stroke-width="0.15">.5</text>
<text x="123.7" y="493.6" textLength="17.6" lengthAdjust="spacingAndGlyphs" font-size="14" fill="#000" font-weight="bold" stroke="#000" stroke-width="0.15">8.5</text>
<text x="24.0" y="513.6" textLength="55.7" lengthAdjust="spacingAndGlyphs" font-size="12" fill="#000" xml:space="preserve" stroke="#000" stroke-width="0.12">MHz  (Start)</text>
<text x="103.8" y="513.6" textLength="55.3" lengthAdjust="spacingAndGlyphs" font-size="12" fill="#000" xml:space="preserve" stroke="#000" stroke-width="0.12">MHz  (Stop)</text>
<text x="42.2" y="539.8" textLength="41.8" lengthAdjust="spacingAndGlyphs" font-size="12" fill="#000" xml:space="preserve" stroke="#000" stroke-width="0.12">|&lt; Full  &gt;|</text>
<text x="40.5" y="560.8" textLength="44.2" lengthAdjust="spacingAndGlyphs" font-size="12" fill="#000" stroke="#000" stroke-width="0.12">&gt; Zoom &lt;</text>
<text x="126.5" y="539.8" textLength="25.1" lengthAdjust="spacingAndGlyphs" font-size="12" fill="#003800" stroke="#003800" stroke-width="0.12">Save</text>
<text x="124.8" y="560.8" textLength="29.4" lengthAdjust="spacingAndGlyphs" font-size="12" fill="#000" stroke="#000" stroke-width="0.12">Recall</text>
<text x="192.0" y="472.0" textLength="57.2" lengthAdjust="spacingAndGlyphs" font-size="11" fill="#000" stroke="#000" stroke-width="0.12">CONTROLS</text>
<text x="208.7" y="489.6" textLength="21.7" lengthAdjust="spacingAndGlyphs" font-size="12" fill="#000" stroke="#000" stroke-width="0.12">Hold</text>
<text x="208.7" y="513.6" textLength="29.6" lengthAdjust="spacingAndGlyphs" font-size="12" fill="#000" stroke="#000" stroke-width="0.12">Bands</text>
<text x="209.7" y="536.5" textLength="12.3" lengthAdjust="spacingAndGlyphs" font-size="12" fill="#fff" stroke="#fff" stroke-width="0.12">HF</text>
<text x="208.7" y="535.5" textLength="12.3" lengthAdjust="spacingAndGlyphs" font-size="12" fill="#ACA899" stroke="#ACA899" stroke-width="0.12">HF</text>
<text x="208.6" y="560.0" textLength="21.0" lengthAdjust="spacingAndGlyphs" font-size="12" fill="#fff" stroke="#fff" stroke-width="0.12">VHF</text>
<text x="207.6" y="559.0" textLength="21.0" lengthAdjust="spacingAndGlyphs" font-size="12" fill="#ACA899" stroke="#ACA899" stroke-width="0.12">VHF</text>
<text x="274.8" y="510.4" textLength="17.6" lengthAdjust="spacingAndGlyphs" font-size="12" fill="#000" stroke="#000" stroke-width="0.12">500</text>
<text x="268.8" y="529.7" textLength="28.5" lengthAdjust="spacingAndGlyphs" font-size="12" fill="#000" stroke="#000" stroke-width="0.12">Points</text>
<text x="274.8" y="546.4" textLength="17.6" lengthAdjust="spacingAndGlyphs" font-size="12" fill="#000" stroke="#000" stroke-width="0.12">703</text>
<text x="275.9" y="562.0" textLength="13.3" lengthAdjust="spacingAndGlyphs" font-size="12" fill="#000" stroke="#000" stroke-width="0.12">mS</text>
<text x="324.8" y="498.1" textLength="98.5" lengthAdjust="spacingAndGlyphs" font-size="11" fill="#000" stroke="#000" stroke-width="0.12">BANDWIDTH and Q</text>
<text x="357.0" y="533.9" textLength="45.6" lengthAdjust="spacingAndGlyphs" font-size="14" fill="#000" font-weight="bold" stroke="#000" stroke-width="0.15">304 000</text>
<text x="486.6" y="533.9" textLength="13.2" lengthAdjust="spacingAndGlyphs" font-size="14" fill="#000" font-weight="bold" stroke="#000" stroke-width="0.15">12</text>
<text x="355.3" y="550.0" textLength="49.9" lengthAdjust="spacingAndGlyphs" font-size="12" fill="#000" stroke="#000" stroke-width="0.12">Bandwidth</text>
<text x="490.0" y="550.0" textLength="7.8" lengthAdjust="spacingAndGlyphs" font-size="12" fill="#000" stroke="#000" stroke-width="0.12">Q</text>
<text x="576.1" y="471.7" textLength="160.5" lengthAdjust="spacingAndGlyphs" font-size="11" fill="#000" stroke="#000" stroke-width="0.12">TRACE ENABLE AND COLOURS</text>
<text x="599.0" y="492.5" textLength="24.9" lengthAdjust="spacingAndGlyphs" font-size="12" fill="#D02020" stroke="#D02020" stroke-width="0.12">SWR</text>
<text x="678.0" y="492.5" textLength="49.5" lengthAdjust="spacingAndGlyphs" font-size="12" fill="#CC9430" stroke="#CC9430" stroke-width="0.12">PHASE [°]</text>
<text x="578.2" y="512.1" textLength="45.7" lengthAdjust="spacingAndGlyphs" font-size="12" fill="#D030D0" stroke="#D030D0" stroke-width="0.12">|Z| [ohm]</text>
<text x="686.0" y="512.1" textLength="41.5" lengthAdjust="spacingAndGlyphs" font-size="12" fill="#30D030" stroke="#30D030" stroke-width="0.12">Rs [ohm]</text>
<text x="582.6" y="535.5" textLength="41.3" lengthAdjust="spacingAndGlyphs" font-size="12" fill="#2020C0" stroke="#2020C0" stroke-width="0.12">R.L. [dB]</text>
<text x="676.6" y="535.5" textLength="50.9" lengthAdjust="spacingAndGlyphs" font-size="12" fill="#208020" stroke="#208020" stroke-width="0.12">|Xs| [ohm]</text>
<text x="595.1" y="556.6" textLength="12.4" lengthAdjust="spacingAndGlyphs" font-size="12" fill="#000" stroke="#000" stroke-width="0.12">All</text>
<text x="649.3" y="557.5" textLength="24.4" lengthAdjust="spacingAndGlyphs" font-size="13" fill="#000" font-weight="bold" stroke="#000" stroke-width="0.15">RSS</text>
<text x="733.4" y="556.6" textLength="26.4" lengthAdjust="spacingAndGlyphs" font-size="12" fill="#000" stroke="#000" stroke-width="0.12">None</text>
<text x="17.0" y="588.5" textLength="101.0" lengthAdjust="spacingAndGlyphs" font-size="11" fill="#fff" stroke="#fff" stroke-width="0.12">SVNA by SP3SWJ - S...</text>
<text x="176.0" y="589.5" textLength="44.5" lengthAdjust="spacingAndGlyphs" font-size="11" fill="#fff" stroke="#fff" stroke-width="0.12">IrfanView</text>
</svg>
</body>
</html>
